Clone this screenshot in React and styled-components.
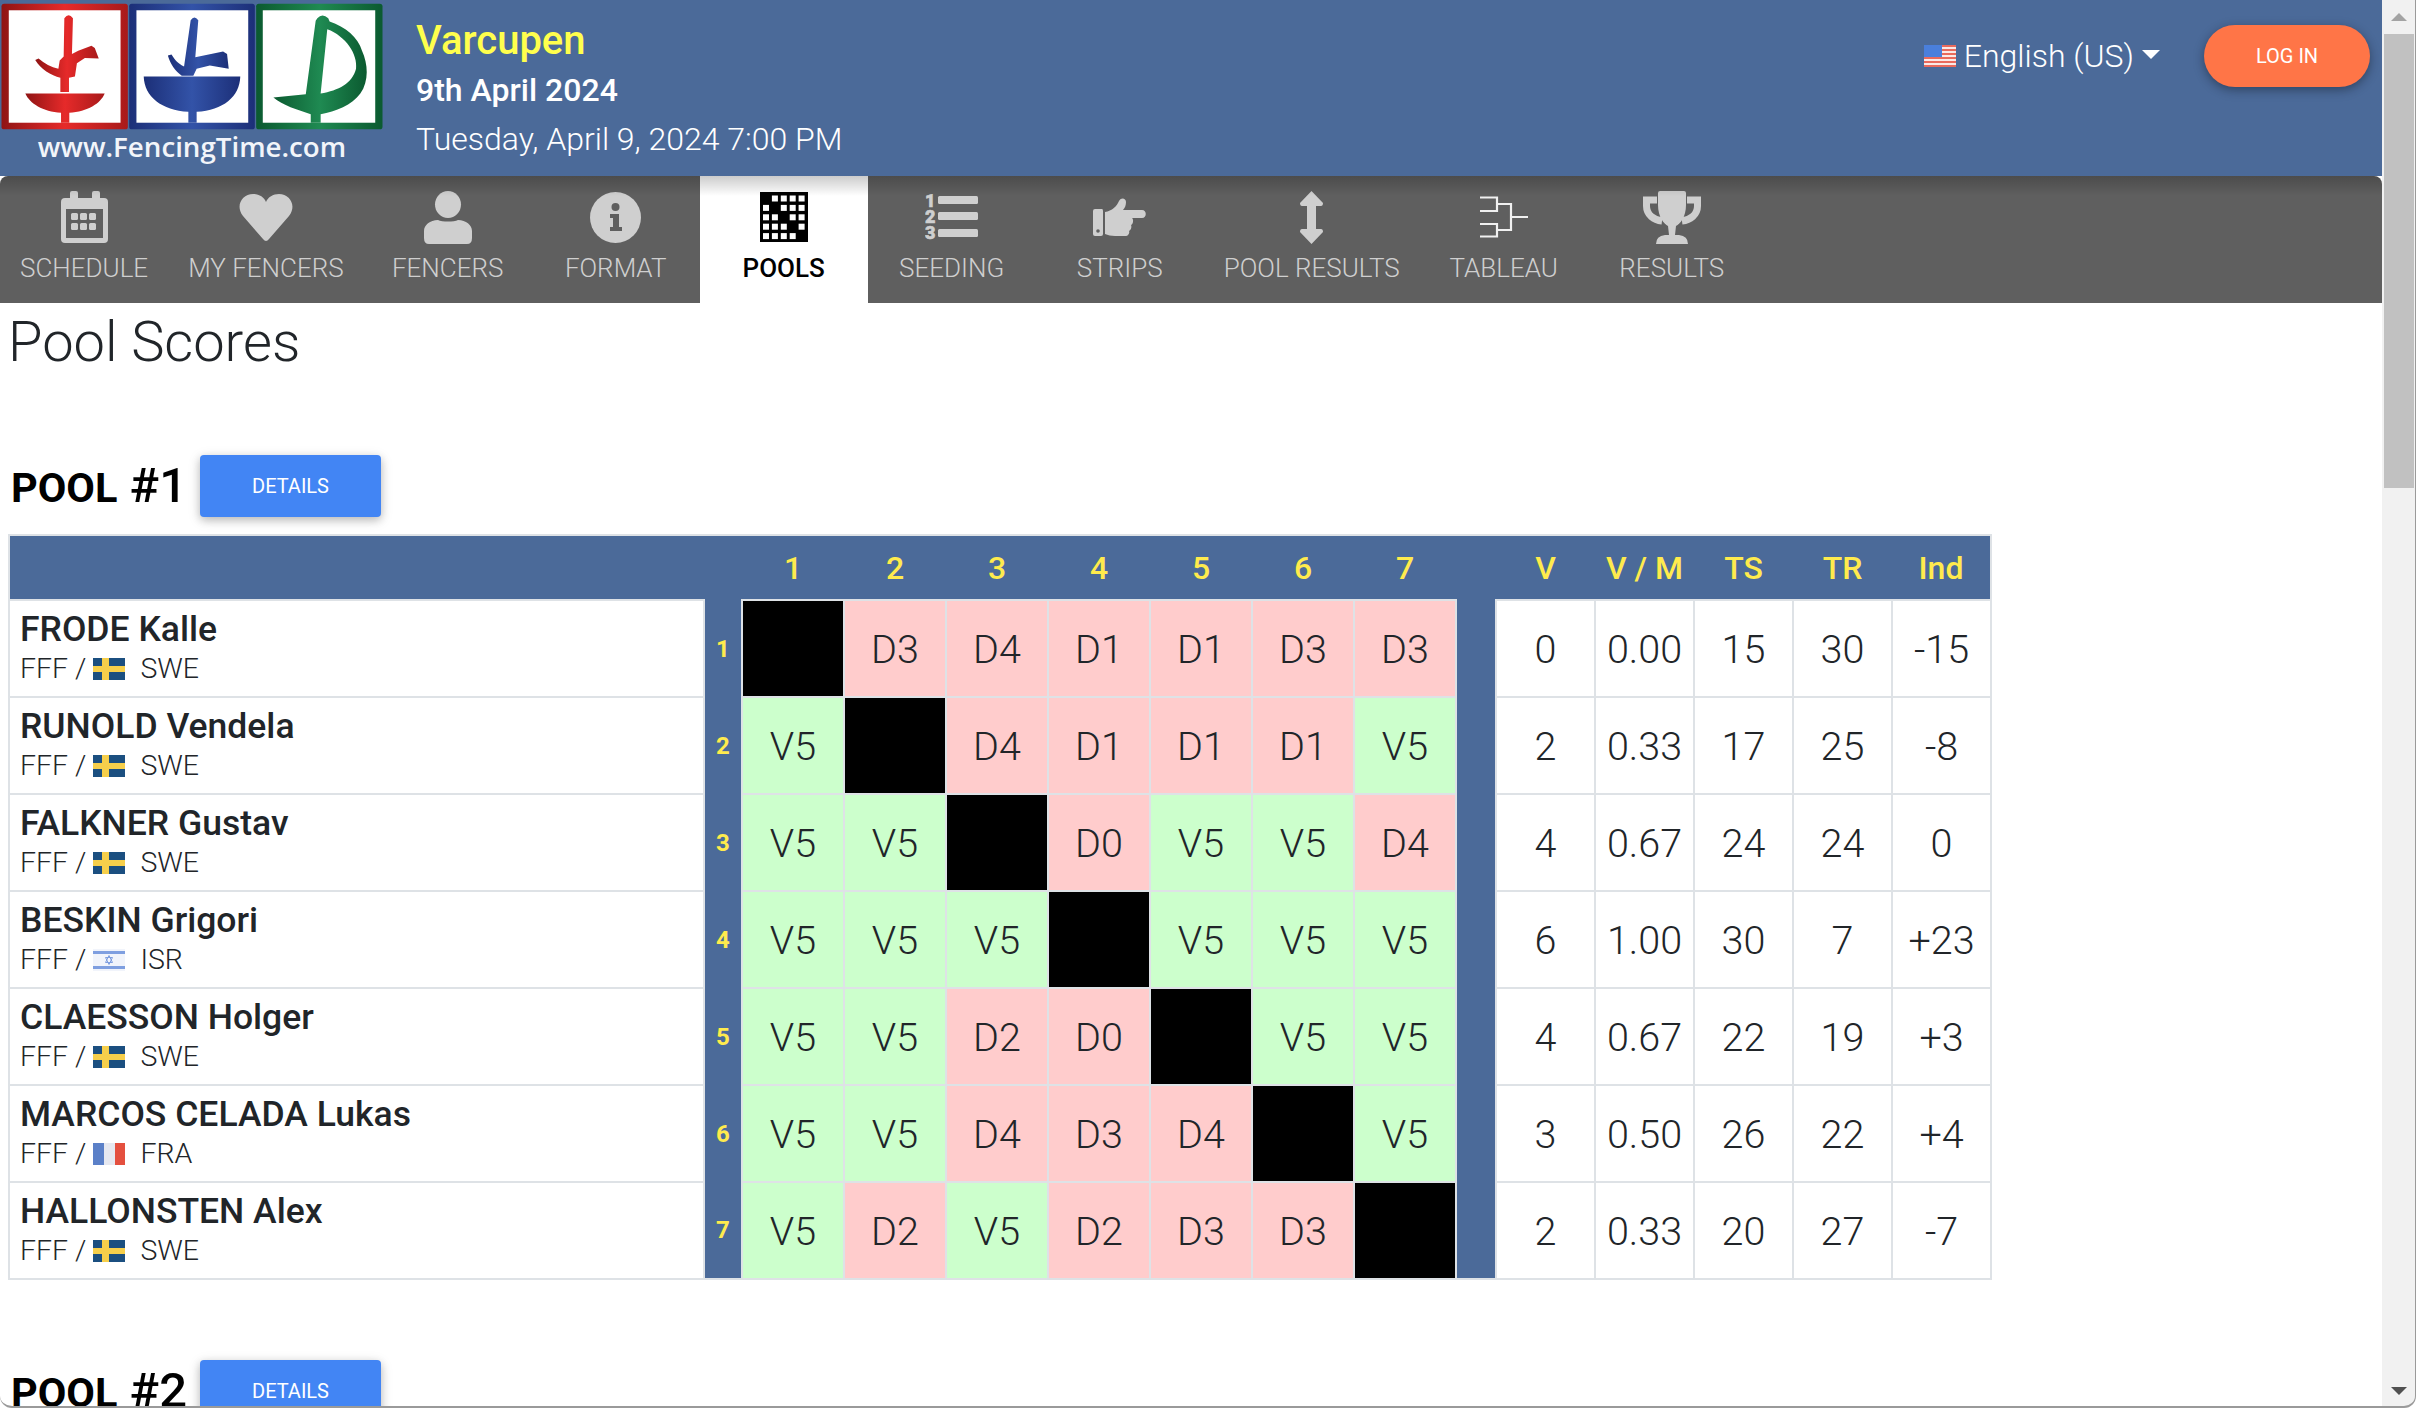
import React from 'react';
import styled, { createGlobalStyle } from 'styled-components';

const GlobalStyle = createGlobalStyle`
  html, body {
    margin: 0;
    padding: 0;
    height: 100%;
    overflow: hidden;
    background: #fff;
  }
  body {
    font-family: 'Roboto', 'Liberation Sans', sans-serif;
    font-weight: 300;
    color: #212529;
  }
  * { box-sizing: border-box; }
`;

const BLUE = '#4b6a99';
const LINE = '#dee2e6';

const Shell = styled.div`
  display: flex;
  height: 100vh;
  overflow: hidden;
`;

const Page = styled.div`
  flex: 1;
  min-width: 0;
  overflow: hidden;
`;

const Banner = styled.header`
  display: flex;
  height: 176px;
  background: ${BLUE};
  color: #fff;
`;

const LogoBlock = styled.div`
  width: 384px;
  flex: none;
  display: flex;
  flex-direction: column;
  align-items: center;
  padding-top: 3px;
`;

const LogoText = styled.span`
  font-family: 'Open Sans', sans-serif;
  font-weight: 600;
  font-size: 27.7px;
  line-height: 30px;
  margin-top: 1px;
  color: #f2f5fa;
`;

const EventInfo = styled.div`
  margin-left: 32px;
  padding-top: 16px;
  display: flex;
  flex-direction: column;
`;

const EventName = styled.div`
  font-size: 40px;
  line-height: 50px;
  font-weight: 500;
  color: #ffff4d;
`;

const EventDate = styled.div`
  font-size: 32px;
  line-height: 49px;
  font-weight: 500;
`;

const EventTime = styled.div`
  font-size: 32px;
  line-height: 48px;
  font-weight: 300;
`;

const BannerRight = styled.div`
  margin-left: auto;
  margin-right: 12px;
  padding-top: 25px;
  display: flex;
  align-items: flex-start;
  gap: 44px;
`;

const Language = styled.div`
  height: 62px;
  display: flex;
  align-items: center;
  gap: 8px;
  font-size: 32px;
  font-weight: 300;
`;

const Caret = styled.span`
  width: 0;
  height: 0;
  margin-top: -4px;
  border-left: 9px solid transparent;
  border-right: 9px solid transparent;
  border-top: 9px solid #fff;
`;

const LoginButton = styled.button`
  width: 166px;
  height: 62px;
  border: 0;
  border-radius: 31px;
  background: #ff7547;
  color: #fff;
  font-family: inherit;
  font-size: 20px;
  font-weight: 400;
  box-shadow: 0 3px 8px rgba(0, 0, 0, 0.25), 0 3px 14px rgba(0, 0, 0, 0.12);
`;

const Nav = styled.nav`
  position: relative;
  display: flex;
  height: 127px;
  background: #5f5f5f;
  border-radius: 8px 8px 0 0;
  overflow: hidden;

  &::after {
    content: '';
    position: absolute;
    left: 0;
    right: 0;
    top: 0;
    height: 20px;
    background: linear-gradient(rgba(0, 0, 0, 0.2), rgba(0, 0, 0, 0));
    pointer-events: none;
  }
`;

const NavItem = styled.div`
  min-width: 168px;
  padding: 0 20px;
  display: flex;
  flex-direction: column;
  align-items: center;
  background: ${(p) => (p.$active ? '#fff' : 'transparent')};
  color: ${(p) => (p.$active ? '#000' : '#cfcfcf')};
`;

const NavIcon = styled.div`
  height: 54px;
  margin-top: 14px;
  display: flex;
  align-items: center;
  justify-content: center;
`;

const NavLabel = styled.span`
  margin-top: 7px;
  font-size: 26px;
  line-height: 34px;
  font-weight: ${(p) => (p.$active ? 500 : 300)};
  white-space: nowrap;
`;

const Content = styled.main`
  padding: 0 8px;
`;

const PageTitle = styled.h1`
  margin: 0;
  padding-top: 6px;
  height: 152px;
  font-size: 56px;
  line-height: 66px;
  font-weight: 300;
  color: #212529;
`;

const PoolSection = styled.section`
  margin-bottom: 80px;
`;

const PoolHead = styled.div`
  display: flex;
  align-items: flex-start;
  height: 62px;
  margin-bottom: 17px;
`;

const PoolTitle = styled.h2`
  margin: 0;
  width: 192px;
  flex: none;
  padding-left: 3px;
  font-size: 49px;
  line-height: 62px;
  height: 62px;
  font-weight: 500;
  color: #000;
  white-space: nowrap;
`;

const PoolWord = styled.span`
  font-size: 41.5px;
  font-weight: 700;
`;

const DetailsButton = styled.button`
  width: 181px;
  height: 62px;
  flex: none;
  border: 0;
  border-radius: 4px;
  background: #4285f4;
  color: #fff;
  font-family: inherit;
  font-size: 20px;
  font-weight: 400;
  box-shadow: 0 3px 8px rgba(0, 0, 0, 0.2), 0 3px 14px rgba(0, 0, 0, 0.12);
`;

const ScoreTable = styled.table`
  table-layout: fixed;
  width: 1982px;
  border-collapse: collapse;
  border: 2px solid ${LINE};
`;

const HeadRow = styled.tr`
  height: 65px;
  background: ${BLUE};
`;

const HeadCell = styled.th`
  padding: 0;
  font-size: 32px;
  font-weight: 500;
  color: #ffeb4d;
  text-align: center;
  white-space: nowrap;
`;

const BodyRow = styled.tr`
  height: 97px;
`;

const NameCell = styled.td`
  padding: 0 0 4px 10px;
  border: 2px solid ${LINE};
  vertical-align: middle;
`;

const FencerName = styled.div`
  font-size: 35.5px;
  line-height: 44px;
  font-weight: 500;
  color: #212529;
`;

const FencerClub = styled.div`
  display: flex;
  align-items: center;
  font-size: 28.5px;
  line-height: 36px;
  font-weight: 300;
  color: #212529;
`;

const FlagSlot = styled.span`
  display: inline-flex;
  margin: 0 15px 0 7px;
`;

const SeedCell = styled.td`
  padding: 0;
  background: ${BLUE};
  color: #ffeb4d;
  font-size: 24px;
  font-weight: 700;
  text-align: center;
  border: 0;
`;

const GapCell = styled.td`
  padding: 0;
  background: ${BLUE};
  border: 0;
`;

const boutBackground = { V: '#ccffcc', D: '#ffcccc' };

const BoutCell = styled.td`
  padding: 1px 0 0;
  text-align: center;
  font-size: 39.5px;
  font-weight: 350;
  color: #212529;
  border: 2px solid ${LINE};
  background: ${(p) => (p.$score ? boutBackground[p.$score[0]] : '#000')};
`;

const ResultCell = styled.td`
  padding: 1px 0 0;
  text-align: center;
  font-size: 39.5px;
  font-weight: 350;
  color: #212529;
  border: 2px solid ${LINE};
`;

const ScrollRail = styled.aside`
  width: 34px;
  flex: none;
  display: flex;
  flex-direction: column;
  align-items: center;
  background: #f1f1f1;
`;

const ScrollArrow = styled.div`
  height: 34px;
  flex: none;
  display: flex;
  align-items: center;
  justify-content: center;

  &::before {
    content: '';
    border-left: 8px solid transparent;
    border-right: 8px solid transparent;
    ${(p) => (p.$down ? 'border-top: 8px solid #505050;' : 'border-bottom: 8px solid #a3a3a3;')}
  }
`;

const ScrollThumb = styled.div`
  width: 30px;
  height: 454px;
  flex: none;
  background: #c1c1c1;
`;

const ScrollSpace = styled.div`
  flex: 1;
`;

const WindowFrame = styled.div`
  position: fixed;
  inset: 0;
  pointer-events: none;
  border-right: 1px solid #9a9a9a;
  border-bottom: 2px solid #9a9a9a;
  border-radius: 0 0 12px 12px;
  box-shadow: 0 0 0 20px #fff;
`;

function FtLogo() {
  return (
    <svg width="384" height="127" viewBox="0 6 1152 384">
      <defs>
        <linearGradient id="redMetal" x1="0" x2="1" y1="0" y2="0">
          <stop offset="0" stopColor="#8f1414" />
          <stop offset="0.5" stopColor="#e62a2a" />
          <stop offset="1" stopColor="#a81a1a" />
        </linearGradient>
        <linearGradient id="blueMetal" x1="0" x2="1" y1="0" y2="0">
          <stop offset="0" stopColor="#1c2f78" />
          <stop offset="0.5" stopColor="#3353a8" />
          <stop offset="1" stopColor="#1c2f78" />
        </linearGradient>
        <linearGradient id="greenMetal" x1="0" x2="1" y1="0" y2="0">
          <stop offset="0" stopColor="#0b5a30" />
          <stop offset="0.5" stopColor="#1f8a52" />
          <stop offset="1" stopColor="#0b5a30" />
        </linearGradient>
      </defs>
      <rect x="0" y="8" width="382" height="380" rx="8" fill="url(#redMetal)" />
      <rect x="22" y="28" width="338" height="340" fill="#fff" />
      <path
        d="M190 52 Q203 34 216 52 L213 160 L232 150 L272 135 L282 142 L294 174 L252 172 L228 188 L222 228 L204 232 L204 275 L178 275 L178 232 C150 225 118 205 102 178 L112 174 C130 190 150 200 172 205 L176 180 L188 168 Z"
        fill="url(#redMetal)"
      />
      <path d="M72 280 H312 C300 310 260 335 205 338 V368 H180 V338 C125 335 85 310 72 280 Z" fill="url(#redMetal)" />

      <rect x="386" y="8" width="380" height="380" rx="8" fill="url(#blueMetal)" />
      <rect x="408" y="28" width="338" height="340" fill="#fff" />
      <path
        d="M572 58 Q583 42 595 58 L586 170 L670 153 L682 160 L687 205 L630 195 L590 205 L580 226 L545 226 C525 212 510 190 503 165 L514 162 C525 180 535 190 552 198 Z"
        fill="url(#blueMetal)"
      />
      <path d="M430 228 H722 C720 290 670 330 590 335 V368 H565 V335 C485 330 432 290 430 228 Z" fill="url(#blueMetal)" />

      <rect x="770" y="8" width="382" height="380" rx="8" fill="url(#greenMetal)" />
      <rect x="790" y="28" width="340" height="340" fill="#fff" />
      <path
        d="M955 52 Q970 35 988 52 L992 62 C1040 78 1078 110 1090 150 C1108 190 1112 240 1085 280 C1060 315 1010 335 965 342 V368 H935 V342 C895 330 850 315 822 292 L920 282 L950 60 Z M985 85 L965 280 C1020 270 1060 250 1072 205 C1078 160 1040 105 985 85 Z"
        fill="url(#greenMetal)"
        fillRule="evenodd"
      />
    </svg>
  );
}

function UsFlag() {
  const stripes = [0, 1, 2, 3, 4, 5];
  return (
    <svg width="32" height="22" viewBox="0 0 32 22">
      <rect width="32" height="22" fill="#fbe9e6" />
      {stripes.map((i) => (
        <rect key={i} y={i * 4} width="32" height="2" fill="#ea6a5c" />
      ))}
      <rect width="18" height="12" fill="#4a7fdc" />
    </svg>
  );
}

function Flag({ code }) {
  if (code === 'SWE') {
    return (
      <svg width="32" height="22" viewBox="0 0 32 22">
        <rect width="32" height="22" fill="#1b4f80" />
        <rect x="9" width="7" height="22" fill="#f6cf4b" />
        <rect y="8" width="32" height="6" fill="#f6cf4b" />
      </svg>
    );
  }
  if (code === 'FRA') {
    return (
      <svg width="32" height="22" viewBox="0 0 32 22">
        <rect width="11" height="22" fill="#5b80c8" />
        <rect x="11" width="11" height="22" fill="#e6e8f0" />
        <rect x="22" width="10" height="22" fill="#e4503f" />
      </svg>
    );
  }
  return (
    <svg width="32" height="22" viewBox="0 0 32 22">
      <rect width="32" height="22" fill="#f1f4fb" />
      <rect y="2" width="32" height="3" fill="#7f9fe0" />
      <rect y="17" width="32" height="3" fill="#7f9fe0" />
      <path d="M16 6.5 L19.5 13.5 H12.5 Z M16 15.5 L12.5 8.5 H19.5 Z" fill="none" stroke="#7f9fe0" strokeWidth="1" />
    </svg>
  );
}

function CalendarIcon() {
  const cells = [
    [12, 24], [21, 24], [30, 24],
    [12, 34], [21, 34], [30, 34],
  ];
  return (
    <svg width="47" height="52" viewBox="0 0 47 52" fill="currentColor">
      <rect x="9" y="0" width="8" height="12" rx="2" />
      <rect x="31" y="0" width="8" height="12" rx="2" />
      <rect x="0" y="7" width="47" height="45" rx="4" />
      <rect x="5" y="18" width="37" height="29" fill="#5f5f5f" />
      {cells.map(([x, y]) => (
        <rect key={`${x}-${y}`} x={x - 2} y={y - 2} width="7" height="7" rx="1.5" />
      ))}
    </svg>
  );
}

function HeartIcon() {
  return (
    <svg width="54" height="47" viewBox="0 0 54 47" fill="currentColor">
      <path d="M27 47 C26 47 25 46 24 45 L4 22 C-4 12 3 0 14 0 C20 0 25 3 27 8 C29 3 34 0 40 0 C51 0 58 12 50 22 L30 45 C29 46 28 47 27 47 Z" />
    </svg>
  );
}

function UserIcon() {
  return (
    <svg width="48" height="53" viewBox="0 0 48 53" fill="currentColor">
      <ellipse cx="24" cy="13.5" rx="13" ry="13.5" />
      <path d="M0 47 V40 C0 34 6 29 14 29 C18 31 30 31 34 29 C42 29 48 34 48 40 V47 Q48 53 43 53 H5 Q0 53 0 47 Z" />
    </svg>
  );
}

function InfoIcon() {
  return (
    <svg width="51" height="51" viewBox="0 0 51 51">
      <circle cx="25.5" cy="25.5" r="25.5" fill="currentColor" />
      <circle cx="25.5" cy="15" r="4" fill="#5f5f5f" />
      <path d="M20 22 H29 V35 H32 V39 H20 V35 H23 V26 H20 Z" fill="#5f5f5f" />
    </svg>
  );
}

function PoolGridIcon() {
  const slots = [0, 1, 2, 3, 4];
  return (
    <svg width="48" height="50" viewBox="0 0 48 50">
      <rect width="48" height="50" fill="#000" />
      {slots.map((row) =>
        slots.map((col) =>
          row === col ? null : (
            <rect key={`${row}-${col}`} x={3 + col * 8.9} y={3.5 + row * 9.4} width="6" height="6" fill="#fff" />
          )
        )
      )}
    </svg>
  );
}

const SeedDigit = styled.text`
  font-family: 'Roboto', sans-serif;
  font-size: 18px;
  font-weight: 900;
  fill: currentColor;
  stroke: currentColor;
  stroke-width: 0.6px;
`;

function SeedingIcon() {
  return (
    <svg width="53" height="46" viewBox="0 0 53 46" fill="currentColor">
      <SeedDigit x="0" y="13">1</SeedDigit>
      <SeedDigit x="0" y="29">2</SeedDigit>
      <SeedDigit x="0" y="45">3</SeedDigit>
      <rect x="13" y="2" width="40" height="8" rx="1.5" />
      <rect x="13" y="18" width="40" height="8" rx="1.5" />
      <rect x="13" y="35" width="40" height="8" rx="1.5" />
    </svg>
  );
}

function HandIcon() {
  return (
    <svg width="53" height="39" viewBox="0 0 53 39" fill="currentColor">
      <path d="M2 11 H9 Q10 11 10 13 V36 Q10 38 8 38 H2 Q0 38 0 36 V13 Q0 11 2 11 Z" />
      <circle cx="5" cy="33" r="1.8" fill="#5f5f5f" />
      <path d="M12 14 C19 13 24 8 26 3 C28 -1 33 0 33 4 C33 7 32 10 30 12 H49 C54 12 54 20 49 20 H39 C41 22 40 26 38 27 C39 29 38 32 36 33 C37 35 35 38 33 38 H22 C18 38 15 37 12 36 Z" />
    </svg>
  );
}

function ArrowsIcon() {
  return (
    <svg width="23" height="53" viewBox="0 0 23 53" fill="currentColor">
      <path d="M11.5 0 L23 12 Q23 15 21 15 H16 V38 H21 Q23 38 23 41 L11.5 53 L0 41 Q0 38 2 38 H7 V15 H2 Q0 15 0 12 Z" />
    </svg>
  );
}

function BracketIcon() {
  return (
    <svg width="48" height="42" viewBox="0 0 48 42" fill="none" stroke="#f0f0f0" strokeWidth="2.2">
      <path d="M0 1.5 H17 V15 H0" />
      <path d="M0 28 H17 V40.5 H0" />
      <path d="M17 8 H31 V34 H17" />
      <path d="M31 21 H48" />
    </svg>
  );
}

function TrophyIcon() {
  return (
    <svg width="58" height="53" viewBox="0 0 58 53" fill="currentColor">
      <path d="M14 9 H3.5 V15 C3.5 24 11 29 19 30" fill="none" stroke="currentColor" strokeWidth="7" />
      <path d="M44 9 H54.5 V15 C54.5 24 47 29 39 30" fill="none" stroke="currentColor" strokeWidth="7" />
      <path d="M15 2 Q15 0 17 0 H41 Q43 0 43 2 V14 C43 26 37 33 33 35 L32 44 H36 Q45 45 45 53 H13 Q13 45 22 44 H26 L25 35 C21 33 15 26 15 14 Z" />
    </svg>
  );
}

const tabs = [
  { label: 'SCHEDULE', icon: <CalendarIcon /> },
  { label: 'MY FENCERS', icon: <HeartIcon /> },
  { label: 'FENCERS', icon: <UserIcon /> },
  { label: 'FORMAT', icon: <InfoIcon /> },
  { label: 'POOLS', icon: <PoolGridIcon />, active: true },
  { label: 'SEEDING', icon: <SeedingIcon /> },
  { label: 'STRIPS', icon: <HandIcon /> },
  { label: 'POOL RESULTS', icon: <ArrowsIcon /> },
  { label: 'TABLEAU', icon: <BracketIcon /> },
  { label: 'RESULTS', icon: <TrophyIcon /> },
];

const fencers = [
  { name: 'FRODE Kalle', nat: 'SWE', bouts: ['', 'D3', 'D4', 'D1', 'D1', 'D3', 'D3'], totals: ['0', '0.00', '15', '30', '-15'] },
  { name: 'RUNOLD Vendela', nat: 'SWE', bouts: ['V5', '', 'D4', 'D1', 'D1', 'D1', 'V5'], totals: ['2', '0.33', '17', '25', '-8'] },
  { name: 'FALKNER Gustav', nat: 'SWE', bouts: ['V5', 'V5', '', 'D0', 'V5', 'V5', 'D4'], totals: ['4', '0.67', '24', '24', '0'] },
  { name: 'BESKIN Grigori', nat: 'ISR', bouts: ['V5', 'V5', 'V5', '', 'V5', 'V5', 'V5'], totals: ['6', '1.00', '30', '7', '+23'] },
  { name: 'CLAESSON Holger', nat: 'SWE', bouts: ['V5', 'V5', 'D2', 'D0', '', 'V5', 'V5'], totals: ['4', '0.67', '22', '19', '+3'] },
  { name: 'MARCOS CELADA Lukas', nat: 'FRA', bouts: ['V5', 'V5', 'D4', 'D3', 'D4', '', 'V5'], totals: ['3', '0.50', '26', '22', '+4'] },
  { name: 'HALLONSTEN Alex', nat: 'SWE', bouts: ['V5', 'D2', 'V5', 'D2', 'D3', 'D3', ''], totals: ['2', '0.33', '20', '27', '-7'] },
];

const totalHeads = ['V', 'V / M', 'TS', 'TR', 'Ind'];
const boutCols = [1, 2, 3, 4, 5, 6, 7];

function PoolTable() {
  return (
    <ScoreTable>
      <colgroup>
        <col style={{ width: 695 }} />
        <col style={{ width: 38 }} />
        {boutCols.map((n) => (
          <col key={n} style={{ width: 102 }} />
        ))}
        <col style={{ width: 40 }} />
        {totalHeads.map((h) => (
          <col key={h} style={{ width: 99 }} />
        ))}
      </colgroup>
      <thead>
        <HeadRow>
          <HeadCell colSpan={2} />
          {boutCols.map((n) => (
            <HeadCell key={n}>{n}</HeadCell>
          ))}
          <HeadCell />
          {totalHeads.map((h) => (
            <HeadCell key={h}>{h}</HeadCell>
          ))}
        </HeadRow>
      </thead>
      <tbody>
        {fencers.map((f, i) => (
          <BodyRow key={f.name}>
            <NameCell>
              <FencerName>{f.name}</FencerName>
              <FencerClub>
                FFF /
                <FlagSlot>
                  <Flag code={f.nat} />
                </FlagSlot>
                {f.nat}
              </FencerClub>
            </NameCell>
            <SeedCell>{i + 1}</SeedCell>
            {f.bouts.map((b, j) => (
              <BoutCell key={j} $score={b}>{b}</BoutCell>
            ))}
            <GapCell />
            {f.totals.map((t, j) => (
              <ResultCell key={j}>{t}</ResultCell>
            ))}
          </BodyRow>
        ))}
      </tbody>
    </ScoreTable>
  );
}

export default function App() {
  return (
    <>
      <GlobalStyle />
      <Shell>
        <Page>
          <Banner>
            <LogoBlock>
              <FtLogo />
              <LogoText>www.FencingTime.com</LogoText>
            </LogoBlock>
            <EventInfo>
              <EventName>Varcupen</EventName>
              <EventDate>9th April 2024</EventDate>
              <EventTime>Tuesday, April 9, 2024 7:00 PM</EventTime>
            </EventInfo>
            <BannerRight>
              <Language>
                <UsFlag />
                English (US)
                <Caret />
              </Language>
              <LoginButton>LOG IN</LoginButton>
            </BannerRight>
          </Banner>
          <Nav>
            {tabs.map((t) => (
              <NavItem key={t.label} $active={t.active}>
                <NavIcon>{t.icon}</NavIcon>
                <NavLabel $active={t.active}>{t.label}</NavLabel>
              </NavItem>
            ))}
          </Nav>
          <Content>
            <PageTitle>Pool Scores</PageTitle>
            <PoolSection>
              <PoolHead>
                <PoolTitle>
                  <PoolWord>POOL</PoolWord> #1
                </PoolTitle>
                <DetailsButton>DETAILS</DetailsButton>
              </PoolHead>
              <PoolTable />
            </PoolSection>
            <PoolSection>
              <PoolHead>
                <PoolTitle>
                  <PoolWord>POOL</PoolWord> #2
                </PoolTitle>
                <DetailsButton>DETAILS</DetailsButton>
              </PoolHead>
            </PoolSection>
          </Content>
        </Page>
        <ScrollRail>
          <ScrollArrow />
          <ScrollThumb />
          <ScrollSpace />
          <ScrollArrow $down />
        </ScrollRail>
      </Shell>
      <WindowFrame />
    </>
  );
}
